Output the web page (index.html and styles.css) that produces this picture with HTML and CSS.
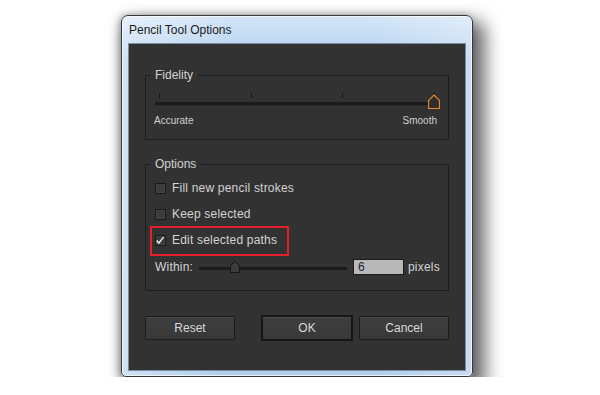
FILE: index.html
```html
<!DOCTYPE html>
<html>
<head>
<meta charset="utf-8">
<link rel="stylesheet" href="styles.css">
</head>
<body>
<div class="window">
  <div class="titlebar">Pencil Tool Options</div>
  <div class="client">
    <div class="group fidelity">
      <span class="legend">Fidelity</span>
      <div class="slider">
        <span class="tick t1"></span>
        <span class="tick t2"></span>
        <span class="tick t3"></span>
        <span class="tick t4"></span>
        <div class="track"></div>
        <svg class="fthumb" width="12" height="15" viewBox="0 0 12 15">
          <polygon points="6,1 11.5,6.5 11.5,14.5 0.5,14.5 0.5,6.5" fill="#2e2e2e" stroke="#e8892b" stroke-width="1.2"/>
        </svg>
      </div>
      <div class="labels"><span>Accurate</span><span>Smooth</span></div>
    </div>

    <div class="group options">
      <span class="legend">Options</span>
      <div class="row"><span class="cb"></span><span>Fill new pencil strokes</span></div>
      <div class="row"><span class="cb"></span><span>Keep selected</span></div>
      <div class="row highlighted">
        <span class="cb"><svg width="11" height="11" viewBox="0 0 11 11"><path d="M1.8 5.6 L4.3 8.2 L9.4 1.8" fill="none" stroke="#e4e4e4" stroke-width="1.7"/></svg></span>
        <span>Edit selected paths</span>
        <span class="redbox"></span>
      </div>
      <div class="row within">
        <span class="wlabel">Within:</span>
        <div class="wslider">
          <div class="wtrack"></div>
          <svg class="wthumb" width="10" height="12" viewBox="0 0 10 12">
            <polygon points="5,0.5 9.5,4.5 9.5,11.5 0.5,11.5 0.5,4.5" fill="#3c3c3c" stroke="#161616" stroke-width="1"/>
          </svg>
        </div>
        <span class="input">6</span>
        <span class="unit">pixels</span>
      </div>
    </div>

    <div class="buttons">
      <span class="btn">Reset</span>
      <div class="btn-right">
        <span class="btn default">OK</span>
        <span class="btn">Cancel</span>
      </div>
    </div>
  </div>
</div>
</body>
</html>
```

FILE: styles.css
```css
html, body {
  margin: 0;
  padding: 0;
  background: #ffffff;
}
body {
  font-family: "Liberation Sans", Arial, sans-serif;
  font-size: 12px;
}
.window {
  margin: 15px 0 0 121px;
  width: 352px;
  height: 362px;
  box-sizing: border-box;
  border: 1px solid #33383f;
  border-radius: 7px 7px 5px 5px;
  background:
    linear-gradient(90deg, rgba(255,255,255,0.4) 0%, rgba(255,255,255,0) 30%, rgba(255,255,255,0) 70%, rgba(255,255,255,0.3) 100%),
    linear-gradient(180deg, #d4e5f7 0%, #b2d0f0 12%, #b0cdec 100%);
  padding: 0 6px 5px 6px;
  display: flex;
  flex-direction: column;
  box-shadow: inset 0 0 0 1px rgba(255,255,255,0.7), 8px 10px 18px 4px rgba(0,0,0,0.6), -2px 0 7px rgba(0,0,0,0.3);
}
.titlebar {
  height: 27px;
  box-sizing: border-box;
  padding: 7px 0 0 1px;
  line-height: 15px;
  color: #1b1b1b;
}
.client {
  flex: 1;
  background: #323232;
  border: 1px solid #7b8ca0;
  padding: 31px 16px 0 16px;
  display: flex;
  flex-direction: column;
}
.group {
  position: relative;
  border: 1px solid #1c1c1c;
  box-sizing: border-box;
}
.legend {
  position: absolute;
  top: -9px;
  left: 4px;
  padding: 0 5px;
  background: #323232;
  color: #d2d2d2;
  line-height: 16px;
}
.fidelity {
  height: 65px;
  padding: 17px 0 0 9px;
}
.slider {
  position: relative;
  width: 286px;
  height: 16px;
}
.tick {
  position: absolute;
  top: 0;
  width: 1px;
  height: 5px;
  background: #141414;
}
.t1 { left: 4px; }
.t2 { left: 96px; }
.t3 { left: 187px; }
.t4 { left: 279px; top: -1px; }
.track {
  position: absolute;
  left: 0;
  top: 9px;
  width: 280px;
  height: 3px;
  background: #1c1c1c;
  border-bottom: 1px solid #2a2a2a;
}
.fthumb {
  position: absolute;
  left: 273px;
  top: 1px;
}
.labels {
  display: flex;
  justify-content: space-between;
  width: 283px;
  margin: 6px 0 0 -1px;
  font-size: 10px;
  line-height: 12px;
  color: #d0d0d0;
}
.options {
  margin-top: 24px;
  height: 127px;
  padding: 16px 0 0 9px;
  display: flex;
  flex-direction: column;
  gap: 11px;
}
.row {
  position: relative;
  display: flex;
  align-items: center;
  height: 15px;
  line-height: 15px;
  color: #d4d4d4;
  letter-spacing: 0.2px;
}
.cb {
  width: 11px;
  height: 11px;
  box-sizing: border-box;
  border: 1px solid #1a1a1a;
  background: #3c3c3c;
  box-shadow: inset 0 0 0 1px #444;
  margin-right: 6px;
  display: flex;
}
.cb svg {
  margin: -1px 0 0 -1px;
}
.redbox {
  position: absolute;
  left: -5px;
  top: -7px;
  width: 139px;
  height: 30px;
  box-sizing: border-box;
  border: 2px solid #e3202b;
}
.within {
  height: 16px;
}
.wlabel {
  width: 44px;
}
.wslider {
  position: relative;
  width: 148px;
  height: 12px;
}
.wtrack {
  position: absolute;
  left: 0;
  top: 6px;
  width: 148px;
  height: 3px;
  background: #1b1b1b;
}
.wthumb {
  position: absolute;
  left: 31px;
  top: 0;
}
.input {
  margin-left: 6px;
  width: 51px;
  height: 16px;
  box-sizing: border-box;
  border: 1px solid #1a1a1a;
  background: #b9b9b9;
  color: #1d1d38;
  padding-left: 4px;
  line-height: 14px;
}
.unit {
  margin-left: 4px;
}
.buttons {
  margin-top: 24px;
  display: flex;
  justify-content: space-between;
  align-items: center;
}
.btn-right {
  display: flex;
  align-items: center;
  gap: 6px;
}
.btn {
  width: 90px;
  height: 24px;
  box-sizing: border-box;
  border: 1px solid #1c1c1c;
  background: linear-gradient(180deg, #3e3e3e 0%, #383838 100%);
  box-shadow: inset 0 1px 0 rgba(255,255,255,0.06);
  color: #dadada;
  display: flex;
  align-items: center;
  justify-content: center;
}
.btn.default {
  width: 92px;
  height: 26px;
  border: 2px solid #161616;
}
```
